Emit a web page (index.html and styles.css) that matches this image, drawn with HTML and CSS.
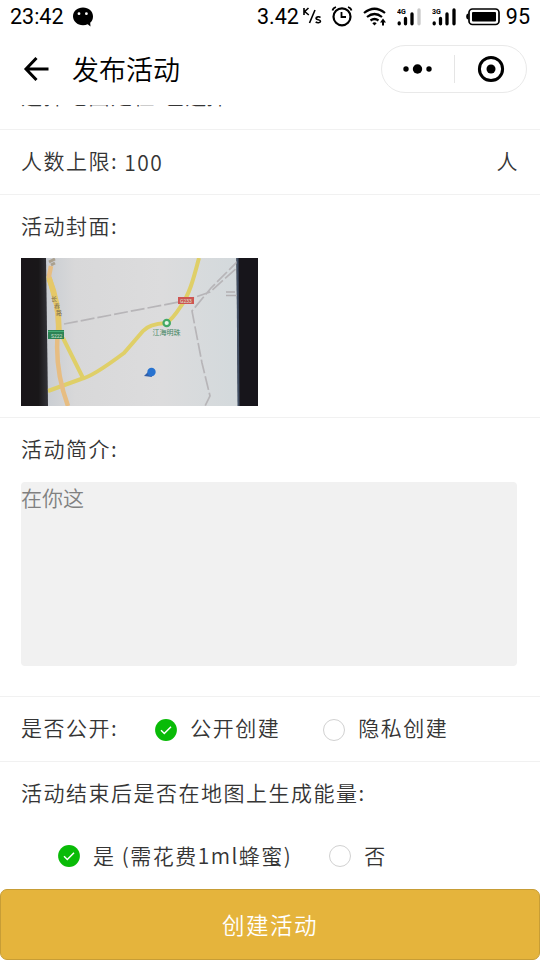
FILE: index.html
```html
<!DOCTYPE html>
<html lang="zh-CN">
<head>
<meta charset="utf-8">
<title>发布活动</title>
<link rel="stylesheet" href="styles.css">
</head>
<body>
<div class="screen">
  <div class="status">
    <span class="time">23:42</span>
    <svg class="bubble" width="22" height="20" viewBox="0 0 22 20"><path d="M11 .5C5.300 .5 1 4.200 1 9.300s4.300 8.900 10 8.900c1.800 0 3.300-.3 4.700-.9l2.800 2.200-.3-3.700c1.900-1.600 2.800-3.800 2.800-6.500C21 4.200 16.700.5 11 .5z"/><circle cx="7" cy="6.700" r="1.400" fill="#fff"/><circle cx="14.400" cy="6.700" r="1.400" fill="#fff"/></svg>
    <span class="speed">3.42</span>
    <svg class="unit" width="20" height="20" viewBox="0 0 20 20"><g fill="none" stroke="#000" stroke-width="1.600"><path d="M2 1v7M6.500 1L2.700 4.500 6.800 8M13 3L7.500 16"/><path d="M18.500 10.500c-1-1-4.500-1-4.500.8 0 2 4.500 1 4.500 3 0 1.800-3.500 1.800-4.800.6"/></g></svg>
    <svg class="alarm" width="22" height="22" viewBox="0 0 22 22"><g fill="none" stroke="#000"><circle cx="11" cy="11.800" r="8.500" stroke-width="2.200"/><path d="M10.500 7v5h4.500" stroke-width="1.800"/><path d="M1.500 5.500Q2 3 5 2M20.500 5.500Q20 3 17 2" stroke-width="1.700"/></g></svg>
    <svg class="wifi" width="24" height="20" viewBox="0 0 24 20"><g fill="none" stroke="#000" stroke-width="2.200"><path d="M1 6Q11.500-2.500 22 6M4 10Q11.500 4 19 10M7.500 13.500Q11.500 10.500 15.500 13.500"/></g><path d="M9.300 16.200Q11.500 14.200 13.700 16.200L11.500 18.500zM20 11.500l3 4h-2v3h-2v-3h-2z"/></svg>
    <svg class="signal" width="24" height="20" viewBox="0 0 24 20"><text x="0" y="7" class="net">4G</text><g stroke="#000" stroke-width="3.300" stroke-linecap="round"><path d="M2.200 16v.8M8.500 11.500v5.300M15 7v9.800"/><path d="M22 3v13.800" stroke="#c8c8c8"/></g></svg>
    <svg class="signal two" width="24" height="20" viewBox="0 0 24 20"><text x="0" y="7" class="net">3G</text><g stroke="#000" stroke-width="3.300" stroke-linecap="round"><path d="M2.200 16v.8M8.500 11.500v5.300M15 7v9.800M22 3v13.800"/></g></svg>
    <svg class="battery" width="34" height="18" viewBox="0 0 34 18"><rect x="3" y="1" width="30" height="15.500" rx="3.500" fill="none" stroke="#000" stroke-width="1.700"/><rect x="6" y="4" width="24" height="9.500" rx="1"/><path d="M2.500 5.500v6Q.2 11.500.2 8.500t2.300-3z"/></svg>
    <span class="level">95</span>
  </div>
  <div class="nav">
    <svg class="back" width="26" height="26" viewBox="0 0 26 26"><path d="M13.500 2L3 13l10.500 11M3.500 13H25.500" fill="none" stroke="#000" stroke-width="3"/></svg>
    <h1>发布活动</h1>
    <div class="capsule">
      <svg width="72" height="46" viewBox="0 0 72 46"><circle cx="24" cy="23" r="2.700"/><circle cx="35.500" cy="23" r="4.700"/><circle cx="47" cy="23" r="2.700"/></svg>
      <i></i>
      <svg width="71" height="46" viewBox="0 0 71 46"><circle cx="36" cy="23" r="11.600" fill="none" stroke="#000" stroke-width="3"/><circle cx="36" cy="23" r="4.500"/></svg>
    </div>
  </div>
  <div class="form">
    <div class="row place"><span>选择地图定位:</span><span class="value">已选择</span><svg class="chevron" width="8" height="16" viewBox="0 0 8 16"><path d="M1 1l6 7-6 7" fill="none" stroke="#bbb"/></svg></div>
    <div class="row limit"><span>人数上限:</span><span class="number">100</span><span class="person">人</span></div>
    <div class="cover">
      <div class="label">活动封面:</div>
      <svg class="photo" width="237" height="148" viewBox="0 0 237 148">
        <defs>
          <linearGradient id="paper" x1="0" y1="0" x2="1" y2="0"><stop offset="0" stop-color="#c9cdd2"/><stop offset=".15" stop-color="#d8d8d9"/><stop offset=".6" stop-color="#dcdcdd"/><stop offset="1" stop-color="#d3d9dc"/></linearGradient>
          <linearGradient id="edge" x1="0" y1="0" x2="1" y2="0"><stop offset="0" stop-color="#191519"/><stop offset=".65" stop-color="#191719"/><stop offset="1" stop-color="#34343a"/></linearGradient>
          <clipPath id="map"><path d="M25 0H215.500L217 148H27z"/></clipPath>
        </defs>
        <rect width="237" height="148" fill="#17151b"/>
        <path d="M0 0H25L27 148H0z" fill="url(#edge)"/>
        <path d="M25 0H215.500L217 148H27z" fill="url(#paper)"/>
        <path d="M215.500 0h2l1 148h-2z" fill="#414e63"/>
        <g clip-path="url(#map)" fill="none">
          <path d="M43 66L163 43L189 34L218 8M218 2L190 30L171 53L181 105L189 138L184 148" stroke="#b7b5b8" stroke-width="1.700" stroke-dasharray="14 3"/>
          <path d="M178 0C172 23 168 37 160 48Q151 62 145 65Q128 66 122 73L103 95Q71 119 60 121L27 133" stroke="#dfcf68" stroke-width="4"/>
          <path d="M42 80L62 120M27 18L36 50" stroke="#dfcf68" stroke-width="4"/>
          <path d="M30 8L28 18Q38 48 37 73Q33 110 47 148" stroke="#e7bd82" stroke-width="4.500"/>
          <path d="M28 20Q38 45 38 72" stroke="#e5c868" stroke-width="5.500"/>
          <path d="M28 4l6-3M30 7l4-2" stroke="#aaa08f" stroke-width="3"/><path d="M205 34h9M205 37.500h11" stroke="#b3b0b2" stroke-width="1.500"/>
        </g>
        <g class="road"><text x="30" y="43">长</text><text x="33" y="50">春</text><text x="35" y="57">路</text></g>
        <rect x="27" y="72" width="16" height="9" fill="#2d8255"/><path d="M27 73.500h16" stroke="#45ad76"/><text x="30" y="79.500" class="sign">S222</text>
        <rect x="157" y="39" width="16" height="7" fill="#ce5552"/><text x="159" y="45" class="sign">G233</text>
        <circle cx="145.700" cy="65" r="3.200" fill="#e6f6e8" stroke="#42a966" stroke-width="2.200"/>
        <text x="131.500" y="77" class="place-name">江海明珠</text>
        <path d="M123 118l6-6 2 7z" fill="#315ea8"/><circle cx="130.500" cy="114" r="4.200" fill="#2873d0"/>
      </svg>
    </div>
    <div class="intro">
      <div class="label">活动简介:</div>
      <div class="textarea">在你这</div>
    </div>
    <div class="row public">
      <span>是否公开:</span>
      <svg class="radio one" width="24" height="24" viewBox="0 0 24 24"><circle cx="12" cy="12" r="10.900" fill="#09bb07"/><path d="M7 12.300l3.300 3.200 6.700-6.800" fill="none" stroke="#fff" stroke-width="1.500"/></svg>
      <span>公开创建</span>
      <svg class="radio two-opt" width="24" height="24" viewBox="0 0 24 24"><circle cx="12" cy="12" r="10.500" fill="#fff" stroke="#d1d1d1"/></svg>
      <span>隐私创建</span>
    </div>
    <div class="energy">
      <div class="label">活动结束后是否在地图上生成能量:</div>
      <div class="options">
        <svg class="radio" width="24" height="24" viewBox="0 0 24 24"><circle cx="12" cy="12" r="10.900" fill="#09bb07"/><path d="M7 12.300l3.300 3.200 6.700-6.800" fill="none" stroke="#fff" stroke-width="1.500"/></svg>
        <span class="yes">是 (需花费1ml蜂蜜)</span>
        <svg class="radio" width="24" height="24" viewBox="0 0 24 24"><circle cx="12" cy="12" r="10.500" fill="#fff" stroke="#d1d1d1"/></svg>
        <span>否</span>
      </div>
    </div>
  </div>
  <div class="submit">创建活动</div>
</div>
</body>
</html>
```
FILE: styles.css
```css
* { box-sizing: border-box; }
body { margin: 0; background: #fff; font-family: "Noto Sans CJK SC", sans-serif; font-weight: 350; color: #353535; }
svg { display: block; flex: none; }
.screen { width: 540px; height: 960px; display: flex; flex-direction: column; overflow: hidden; }
.status { height: 34px; flex: none; display: flex; align-items: center; padding: 0 10px; color: #000; font: 21.5px/34px Roboto, sans-serif; white-space: nowrap; }
.time { width: 62px; }
.bubble { margin-top: -1px; }
.speed { margin-left: 163px; width: 45px; }
.unit { margin-top: 0; }
.alarm { margin-left: 9px; margin-top: -2px; }
.wifi { margin-left: 10px; }
.signal { margin-left: 10px; margin-top: -1px; }
.signal.two { margin-left: 11px; }
.net { font: bold 7px Roboto, sans-serif; }
.battery { margin-left: 10px; margin-top: -1px; }
.level { margin-left: 6px; }
.nav { height: 71px; flex: none; display: flex; align-items: center; padding: 0 13px 2px 23px; color: #000; }
.back { margin-top: 1px; }
.nav h1 { margin: 0 auto 0 23px; font-size: 27px; line-height: 40px; font-weight: 350; }
.capsule { width: 146px; height: 48px; border: 1px solid #e9e9e9; border-radius: 24px; display: flex; align-items: center; }
.capsule i { width: 1px; height: 28px; background: #e5e5e5; flex: none; }
.form { flex: 1; min-height: 0; overflow: hidden; font-size: 21px; letter-spacing: 1.5px; line-height: 32px; display: flex; flex-direction: column; }
.row { height: 65px; flex: none; border-bottom: 1px solid #f1f1f1; display: flex; align-items: center; padding: 0 21px 4px; white-space: nowrap; }
.place { margin-top: -40px; padding-bottom: 4px; }
.value { margin-left: 1px; letter-spacing: 0; }
.chevron { margin-left: auto; }
.number { margin-left: 6px; padding-top: 3px; }
.person { margin-left: auto; }
.cover { height: 223px; flex: none; padding: 14px 21px 0; border-bottom: 1px solid #f1f1f1; }
.photo { margin-top: 17px; }
.road { font: 6px "Noto Sans CJK SC", sans-serif; letter-spacing: 0; fill: #776b50; }
.sign { font: 5px Roboto, sans-serif; letter-spacing: 0; fill: #d8e4d4; }
.place-name { font: 7px "Noto Sans CJK SC", sans-serif; letter-spacing: 0; fill: #438562; }
.intro { height: 279px; flex: none; padding: 14px 23px 0 21px; border-bottom: 1px solid #f1f1f1; }
.textarea { margin-top: 18px; height: 184px; border-radius: 4px; background: #f1f1f1; color: #808080; letter-spacing: 0; line-height: 31px; }
.public { height: 65px; }
.radio { margin-top: 2px; }
.public .radio { margin-top: 5px; }
.radio.one { margin-left: 36px; margin-right: 12px; }
.radio.two-opt { margin-left: 42px; margin-right: 12px; }
.energy { flex: none; padding: 14px 21px 0; }
.options { display: flex; align-items: center; margin: 31px 0 0 36px; }
.options span { margin-left: 12px; }
.options .yes { margin-right: 36px; }
.submit { height: 71px; flex: none; border: 1px solid #c79d36; border-radius: 7px; background: #e5b43c; color: #fff; text-align: center; font-size: 22.5px; letter-spacing: 1.5px; line-height: 68px; }
```
